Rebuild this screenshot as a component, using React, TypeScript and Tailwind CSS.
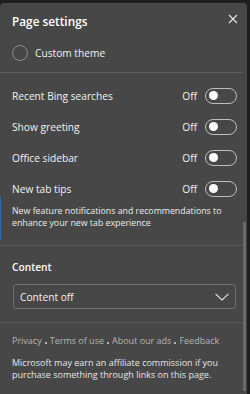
import React from "react";

function Toggle() {
  return (
    <div className="flex h-[16px] w-[32px] items-center rounded-full border border-[#bdbdbd]">
      <div className="ml-[3px] h-[8.5px] w-[8.5px] rounded-full bg-white" />
    </div>
  );
}

function Row({ label }: { label: string }) {
  return (
    <div className="flex h-[31px] items-center justify-between pl-[12px] pr-[6px]">
      <span className="text-[10.2px] leading-[14px] text-[#f2f2f2]">{label}</span>
      <div className="flex items-center gap-[8px]">
        <span className="text-[10.2px] leading-[14px] text-[#f2f2f2]">Off</span>
        <Toggle />
      </div>
    </div>
  );
}

function Dot() {
  return <span className="mx-[3px] inline-block h-[2px] w-[2px] bg-[#b4b4b4] align-baseline" />;
}

export default function App() {
  return (
    <div
      className="relative flex h-[394px] w-[250px] overflow-hidden bg-[#1f1f1f] pt-[3px]"
      style={{ fontFamily: '"Open Sans", "Noto Sans", sans-serif' }}
    >
      <div className="flex h-[391px] w-[247px] rounded-t-[4px] bg-[#474747]">
        <div className="flex w-[243px] flex-col">
          <div className="flex items-start justify-between pl-[12px] pr-[5px] pt-[10px]">
            <span className="text-[11.8px] font-semibold leading-[16px] text-white">Page settings</span>
            <svg width="10" height="10" viewBox="0 0 10 10" className="mt-[1px]">
              <path d="M1 1 L9 9 M9 1 L1 9" stroke="#e6e6e6" strokeWidth="1.1" fill="none" />
            </svg>
          </div>
          <div className="mt-[15px] flex h-[18px] items-center gap-[7px] pl-[12px]">
            <div className="h-[16px] w-[16px] rounded-full border border-[#8c8c8c]" />
            <span className="text-[10.2px] leading-[14px] text-[#f2f2f2]">Custom theme</span>
          </div>
          <div className="mt-[10px] h-[1px] bg-[#5c5c5c]" />
          <div className="mt-[7px] flex flex-col">
            <Row label="Recent Bing searches" />
            <Row label="Show greeting" />
            <Row label="Office sidebar" />
            <Row label="New tab tips" />
          </div>
          <p className="mt-[1px] px-[12px] text-[8.8px] leading-[12px] text-[#ececec]">
            New feature notifications and recommendations to enhance your new tab experience
          </p>
          <div className="mt-[16px] h-[1px] bg-[#5c5c5c]" />
          <div className="mt-[14px] pl-[12px] text-[10.2px] font-semibold leading-[14px] text-white">Content</div>
          <div className="ml-[13px] mt-[10px] flex h-[25px] w-[223px] items-center justify-between rounded-[3px] border border-[#6e6e6e] pl-[6px] pr-[6px]">
            <span className="text-[10.2px] leading-[14px] text-[#f2f2f2]">Content off</span>
            <svg width="14" height="8" viewBox="0 0 14 8">
              <path d="M0.5 0.8 L7 7 L13.5 0.8" stroke="#e6e6e6" strokeWidth="1.1" fill="none" />
            </svg>
          </div>
          <div className="mt-[13px] h-[1px] bg-[#5c5c5c]" />
          <div className="mt-[12px] pl-[12px] text-[9px] leading-[12px] text-[#b4b4b4]">
            Privacy<Dot />Terms of use<Dot />About our ads<Dot />Feedback
          </div>
          <p className="mt-[10px] px-[12px] text-[9px] leading-[12px] text-[#e6e6e6]">
            Microsoft may earn an affiliate commission if you purchase something through links on this page.
          </p>
        </div>
        <div className="flex w-[4px] flex-col">
          <div className="h-[219px]" />
          <div className="mb-[3px] w-[3px] flex-1 bg-[#6a6a6a]" />
        </div>
      </div>
      <div className="absolute left-0 top-[197px] h-[43px] w-[1px] bg-[#2a6bb5]" />
    </div>
  );
}
